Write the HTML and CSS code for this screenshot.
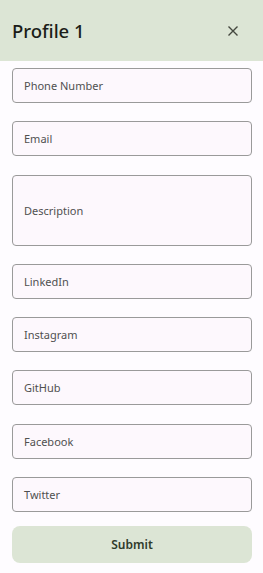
FILE: index.html
```html
<!DOCTYPE html>
<html>
<head>
<meta charset="utf-8">
<link rel="stylesheet" href="styles.css">
</head>
<body>
<div class="app">
  <header class="bar">
    <h1 class="title">Profile 1</h1>
    <button class="close" aria-label="Close">
      <svg width="12" height="12" viewBox="0 0 12 12"><path d="M1.5 1.5L10.5 10.5M10.5 1.5L1.5 10.5" stroke="#44483f" stroke-width="1.4" fill="none"/></svg>
    </button>
  </header>
  <form class="form">
    <div class="field"><span class="ph">Phone Number</span></div>
    <div class="field"><span class="ph">Email</span></div>
    <div class="field tall"><span class="ph">Description</span></div>
    <div class="field"><span class="ph">LinkedIn</span></div>
    <div class="field"><span class="ph">Instagram</span></div>
    <div class="field"><span class="ph">GitHub</span></div>
    <div class="field"><span class="ph">Facebook</span></div>
    <div class="field"><span class="ph">Twitter</span></div>
    <button type="button" class="submit">Submit</button>
  </form>
</div>
</body>
</html>
```
FILE: styles.css
```css
html, body {
  margin: 0;
  padding: 0;
  background: #fefcff;
}
body {
  font-family: "Noto Sans", "Open Sans", sans-serif;
  width: 263px;
  height: 573px;
  overflow: hidden;
}
.bar {
  height: 61px;
  background: #dce5d5;
  display: flex;
  align-items: center;
  justify-content: space-between;
  padding: 0 12px 0 12px;
  box-sizing: border-box;
}
.title {
  margin: 0;
  font-size: 18.5px;
  font-weight: 500;
  color: #1b1d18;
}
.close {
  border: 0;
  background: none;
  padding: 0;
  width: 20px;
  height: 20px;
  display: flex;
  align-items: center;
  justify-content: center;
  margin-right: 8px;
}
.form {
  display: flex;
  flex-direction: column;
  padding: 7px 11px 0 12px;
  gap: 18.3px;
}
.field {
  height: 35px;
  box-sizing: border-box;
  border: 1px solid #9a9a9a;
  border-radius: 4px;
  background: #fdf8fd;
  display: flex;
  align-items: center;
  padding-left: 11px;
}
.field.tall {
  height: 71px;
}
.ph {
  font-size: 11px;
  color: #505050;
}
.submit {
  margin-top: -4.3px;
  height: 37px;
  border: 0;
  border-radius: 8px;
  background: #dce5d5;
  color: #2f3b2b;
  font-family: "Noto Sans", "Open Sans", sans-serif;
  font-size: 12px;
  font-weight: 600;
}
```
